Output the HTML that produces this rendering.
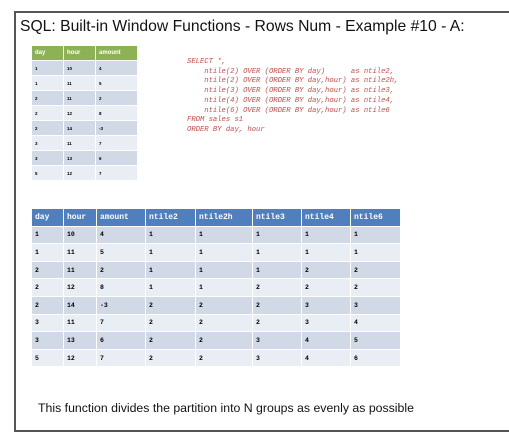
<!DOCTYPE html>
<html><head><meta charset="utf-8"><style>
body{margin:0;width:509px;height:444px;background:#fff;position:relative;overflow:hidden;font-family:"Liberation Sans",sans-serif}
.frame{position:absolute;left:14px;top:11px;width:520px;height:421px;border:2px solid #555;border-right:none;box-sizing:border-box}
.title{position:absolute;left:20px;top:18px;font-size:15.7px;color:#111;white-space:nowrap}
table{position:absolute;border-collapse:separate;border-spacing:1px;font-weight:bold}
td{padding:0 0 0 3px;box-sizing:border-box}
.s{left:31px;top:45px;font-size:4.5px}
.s td{height:14px;width:31px}
.s tr:first-child td{background:#8db255;color:#fff;font-size:6px}
.b{left:31px;top:208px;font-size:6.5px;font-family:"Liberation Mono",monospace}
.b td{height:16.6px}
.b tr:first-child td{background:#4f7fbd;color:#fff;font-size:8px}
tr.o td{background:#d1d8e6}tr.e td{background:#e9edf4}
.code{position:absolute;left:187px;top:58px;font-family:"Liberation Mono",monospace;font-style:italic;font-size:7.2px;line-height:9.7px;color:#c0504d;white-space:pre}
.foot{position:absolute;left:38px;top:401px;font-size:12.3px;color:#111;white-space:nowrap}
</style></head><body>
<div class="frame"></div>
<div class="title">SQL: Built-in Window Functions - Rows Num - Example #10 - A:</div>
<table class="s">
<tr><td>day</td><td>hour</td><td style="width:41px">amount</td></tr>
<tr class="o"><td>1</td><td>10</td><td>4</td></tr>
<tr class="e"><td>1</td><td>11</td><td>5</td></tr>
<tr class="o"><td>2</td><td>11</td><td>2</td></tr>
<tr class="e"><td>2</td><td>12</td><td>8</td></tr>
<tr class="o"><td>2</td><td>14</td><td>-3</td></tr>
<tr class="e"><td>3</td><td>11</td><td>7</td></tr>
<tr class="o"><td>3</td><td>13</td><td>6</td></tr>
<tr class="e"><td>5</td><td>12</td><td>7</td></tr>
</table>
<div class="code">SELECT *,
    ntile(2) OVER (ORDER BY day)      as ntile2,
    ntile(2) OVER (ORDER BY day,hour) as ntile2h,
    ntile(3) OVER (ORDER BY day,hour) as ntile3,
    ntile(4) OVER (ORDER BY day,hour) as ntile4,
    ntile(6) OVER (ORDER BY day,hour) as ntile6
FROM sales s1
ORDER BY day, hour</div>
<table class="b">
<tr><td style="width:31px">day</td><td style="width:32px">hour</td><td style="width:48px">amount</td><td style="width:49px">ntile2</td><td style="width:56px">ntile2h</td><td style="width:48px">ntile3</td><td style="width:48px">ntile4</td><td style="width:49px">ntile6</td></tr>
<tr class="o"><td>1</td><td>10</td><td>4</td><td>1</td><td>1</td><td>1</td><td>1</td><td>1</td></tr>
<tr class="e"><td>1</td><td>11</td><td>5</td><td>1</td><td>1</td><td>1</td><td>1</td><td>1</td></tr>
<tr class="o"><td>2</td><td>11</td><td>2</td><td>1</td><td>1</td><td>1</td><td>2</td><td>2</td></tr>
<tr class="e"><td>2</td><td>12</td><td>8</td><td>1</td><td>1</td><td>2</td><td>2</td><td>2</td></tr>
<tr class="o"><td>2</td><td>14</td><td>-3</td><td>2</td><td>2</td><td>2</td><td>3</td><td>3</td></tr>
<tr class="e"><td>3</td><td>11</td><td>7</td><td>2</td><td>2</td><td>2</td><td>3</td><td>4</td></tr>
<tr class="o"><td>3</td><td>13</td><td>6</td><td>2</td><td>2</td><td>3</td><td>4</td><td>5</td></tr>
<tr class="e"><td>5</td><td>12</td><td>7</td><td>2</td><td>2</td><td>3</td><td>4</td><td>6</td></tr>
</table>
<div class="foot">This function divides the partition into N groups as evenly as possible</div>
</body></html>
